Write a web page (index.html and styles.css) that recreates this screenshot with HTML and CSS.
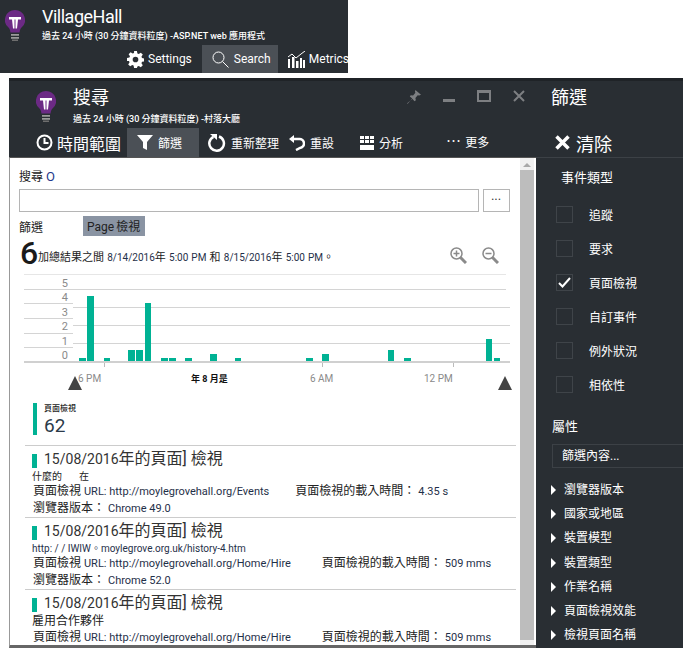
FILE: index.html
```html
<!DOCTYPE html>
<html lang="zh-Hant">
<head>
  <meta charset="UTF-8" />
  <title>搜尋</title>
  <link rel="stylesheet" href="styles.css">
</head>
<body>
  <svg class="defs" width="0" height="0">
    <symbol id="bulb" viewBox="0 0 20 31">
      <path fill="#6c2a85" d="M10 0a10 10 0 0 0-6.500 17.600c1.200 1.200 1.800 3 1.900 4.900h9.200c.1-1.900.7-3.700 1.900-4.900A10 10 0 0 0 10 0z"/>
      <path fill="#fff" d="M4 7h12v2.500h-3l-1 9h-1.500v-9h-1v9H8l-1-9H4z"/>
      <path fill="#9a9a9a" d="M6 24h8v1.800H6zM6 27h8v1.800H6z"/>
      <path fill="#6e6e6e" d="M7 29.500h6V31H7z"/>
    </symbol>
  </svg>

  <header class="app-bar">
    <div class="app-head">
      <svg class="bulb"><use href="#bulb"/></svg>
      <div>
        <h1 class="app-title">VillageHall</h1>
        <p class="sub">過去 24 小時 (30 分鐘資料粒度) -ASP.NET web 應用程式</p>
      </div>
    </div>
    <nav class="app-tabs">
      <a class="app-tab">
        <svg width="17" height="17" viewBox="0 0 24 24"><path fill="#fff" fill-rule="evenodd" d="M10 0h4l.7 3.400 1.900.8 2.900-1.900 2.800 2.800-1.900 2.900.8 1.900 3.400.7v4l-3.400.7-.8 1.900 1.900 2.900-2.800 2.800-2.900-1.900-1.900.8L14 24h-4l-.7-3.400-1.900-.8-2.900 1.900-2.800-2.800 1.900-2.900-.8-1.900L0 14v-4l3.400-.7.800-1.900-1.900-2.900 2.800-2.800 2.900 1.900 1.900-.8zM12 8a4 4 0 1 0 0 8 4 4 0 0 0 0-8z"/></svg>
        Settings
      </a>
      <a class="app-tab app-tab-on">
        <svg width="17" height="17" viewBox="0 0 17 17" fill="none" stroke="#fff"><circle cx="6.500" cy="6.500" r="5.500"/><path d="M10.500 10.500l6 6"/></svg>
        Search
      </a>
      <a class="app-tab">
        <svg width="17" height="17" viewBox="0 0 17 17"><path fill="#fff" d="M0 8h2v9H0zM4 6h2.500v11H4zM8 10h2.500v7H8zM12 7h2v10h-2zM15 9h2v8h-2z"/><path fill="none" stroke="#fff" d="M0 6l4-3 4 4 5-4 4-3"/></svg>
        Metrics
      </a>
    </nav>
  </header>

  <div class="blade">
    <main class="main">
      <div class="blade-head">
        <svg class="bulb"><use href="#bulb"/></svg>
        <div class="blade-names">
          <h2 class="blade-title">搜尋</h2>
          <p class="sub">過去 24 小時 (30 分鐘資料粒度) -村落大廳</p>
        </div>
        <div class="win-btns">
          <svg width="14" height="14" viewBox="0 0 15 15"><path fill="#7d7f82" d="M9 0l6 5-2 1-1.500-.500L9 8.500 9.500 11l-1.500 1-2.500-3L1 14.500 0 15l.5-1L6 9.500 3 7l1-1.500 2.500.500 2.500-3L8.500 2z"/></svg>
          <svg width="12" height="13" viewBox="0 0 12 13"><path fill="#7d7f82" d="M0 9h12v3H0z"/></svg>
          <svg width="14" height="12" viewBox="0 0 14 12"><path fill="#7d7f82" d="M0 0h14v12H0zM2 3v7h10V3z"/></svg>
          <svg width="12" height="12" viewBox="0 0 12 12" fill="none" stroke="#7d7f82" stroke-width="2"><path d="M1 1l10 10M11 1L1 11"/></svg>
        </div>
      </div>
      <div class="cmd-bar">
        <a class="cmd cmd-time">
          <svg width="17" height="17" viewBox="0 0 17 17" fill="none" stroke="#fff" stroke-width="2"><circle cx="8.500" cy="8.500" r="7"/><path d="M8.500 4v5h4"/></svg>
          時間範圍
        </a>
        <a class="cmd cmd-on">
          <svg width="16" height="15" viewBox="0 0 16 15"><path fill="#fff" d="M0 0h16l-6 7v8l-4-2V7z"/></svg>
          篩選
        </a>
        <a class="cmd cmd-refresh">
          <svg width="18" height="19" viewBox="0 0 18 19" fill="none" stroke="#fff" stroke-width="2.500"><path d="M11 3.500a7.300 7.300 0 1 1-5.500.3"/><path fill="#fff" stroke="none" d="M2 1h7v6z"/></svg>
          重新整理
        </a>
        <a class="cmd cmd-reset">
          <svg width="16" height="16" viewBox="0 0 16 16" fill="none" stroke="#fff" stroke-width="2.500"><path d="M3 4h7a4.500 4.500 0 0 1 1 9l-4 2"/><path fill="#fff" stroke="none" d="M5 0v8L0 4z"/></svg>
          重設
        </a>
        <a class="cmd cmd-chart">
          <svg width="14" height="14" viewBox="0 0 14 14"><path fill="#fff" d="M0 0h4v3H0zM5 0h4v3H5zM10 0h4v3h-4zM0 4h4v3H0zM5 4h4v3H5zM10 4h4v3h-4zM0 9h14v5H0z"/></svg>
          分析
        </a>
        <a class="cmd cmd-more"><span class="dots">•••</span> 更多</a>
      </div>
      <div class="pane">
        <div class="pane-body">
          <label class="field-label">搜尋 <span class="blue">O</span></label>
          <div class="search-row">
            <div class="search-box"></div>
            <div class="search-more">•••</div>
          </div>
          <div class="filter-row">
            <span>篩選</span>
            <span class="chip">Page 檢視</span>
          </div>
          <div class="total-row">
            <b class="total">6</b>
            <span class="total-text">加總結果之間 <em>8/14/2016</em>年 <em>5:00 PM</em> 和 <em>8/15/2016</em>年 <em>5:00 PM</em>。</span>
            <span class="zooms">
              <svg width="17" height="17" viewBox="0 0 17 17" fill="none" stroke="#8a8a8a" stroke-width="1.500"><circle cx="6.500" cy="6.500" r="5.500"/><path stroke-width="3" d="M10.500 10.500l5.500 5.500"/><path d="M3.500 6.500h6M6.500 3.500v6"/></svg>
              <svg width="17" height="17" viewBox="0 0 17 17" fill="none" stroke="#8a8a8a" stroke-width="1.500"><circle cx="6.500" cy="6.500" r="5.500"/><path stroke-width="3" d="M10.500 10.500l5.500 5.500"/><path d="M3.500 6.500h6"/></svg>
            </span>
          </div>

          <svg class="chart" width="496" height="120" viewBox="0 0 496 120">
            <g stroke="#d4d4d4">
              <path stroke="#e6e6e6" d="M5 .5h482"/>
              <path d="M5 15.500h482M5 29.500h49M5 44.500h49M5 59.500h49M5 73.500h49M54 33.500h437M54 51.500h437M54 69.500h437"/>
            </g>
            <g class="chart-nums" text-anchor="end">
              <text x="49" y="13">5</text><text x="49" y="27">4</text><text x="49" y="42">3</text>
              <text x="49" y="56">2</text><text x="49" y="71">1</text><text x="49" y="85">0</text>
            </g>
            <g fill="#00b294">
              <rect x="60" y="84" width="7" height="4"/><rect x="68" y="22" width="7" height="66"/>
              <rect x="85" y="84" width="6" height="4"/><rect x="109" y="76" width="7" height="12"/>
              <rect x="117" y="76" width="7" height="12"/><rect x="126" y="29" width="6" height="59"/>
              <rect x="142" y="84" width="7" height="4"/><rect x="150" y="84" width="7" height="4"/>
              <rect x="166" y="84" width="7" height="4"/><rect x="191" y="80" width="7" height="8"/>
              <rect x="216" y="84" width="6" height="4"/><rect x="287" y="84" width="7" height="4"/>
              <rect x="303" y="80" width="7" height="8"/><rect x="369" y="76" width="6" height="12"/>
              <rect x="385" y="84" width="7" height="4"/><rect x="467" y="65" width="6" height="23"/>
              <rect x="475" y="84" width="6" height="4"/>
            </g>
            <path stroke="#d0d0d0" stroke-width="2" d="M5 88h486"/>
            <path stroke="#bbb" d="M85.500 89v4M303.500 89v4M434.500 89v4"/>
            <g class="chart-axis">
              <text x="59" y="108">6 PM</text>
              <text x="172" y="108" class="chart-axis-bold">年 8 月是</text>
              <text x="291" y="108">6 AM</text>
              <text x="405" y="108">12 PM</text>
            </g>
            <path fill="#444" d="M49 116l7-14 7 14zM479 116l7-14 7 14z"/>
          </svg>

          <div class="summary">
            <small>頁面檢視</small>
            <strong>62</strong>
          </div>

          <article class="row">
            <h3 class="row-title"><em>15/08/2016</em>年的頁面] 檢視</h3>
            <p class="row-what">什麼的<span class="gap"></span>在</p>
            <p class="row-line"><span class="col-url">頁面檢視 <em>URL: http://moylegrovehall.org/Events</em></span><span>頁面檢視的載入時間： <em>4.35 s</em></span></p>
            <p class="row-line"><span>瀏覽器版本： <em>Chrome 49.0</em></span></p>
          </article>
          <article class="row">
            <h3 class="row-title"><em>15/08/2016</em>年的頁面] 檢視</h3>
            <p class="row-what row-link">http: / / IWIW。moylegrove.org.uk/history-4.htm</p>
            <p class="row-line row-wide"><span class="col-url">頁面檢視 <em>URL: http://moylegrovehall.org/Home/Hire</em></span><span>頁面檢視的載入時間： <em>509 mms</em></span></p>
            <p class="row-line"><span>瀏覽器版本： <em>Chrome 52.0</em></span></p>
          </article>
          <article class="row row-last">
            <h3 class="row-title"><em>15/08/2016</em>年的頁面] 檢視</h3>
            <p class="row-line">雇用合作夥伴</p>
            <p class="row-line row-wide"><span class="col-url">頁面檢視 <em>URL: http://moylegrovehall.org/Home/Hire</em></span><span>頁面檢視的載入時間： <em>509 mms</em></span></p>
          </article>
        </div>
        <div class="scroll">
          <i class="scroll-up"></i>
          <div class="scroll-thumb"></div>
        </div>
      </div>
    </main>

    <aside class="side">
      <h2 class="side-title">篩選</h2>
      <a class="clear">
        <svg width="15" height="15" viewBox="0 0 15 15" fill="none" stroke="#fff" stroke-width="3.500"><path d="M1.500 1.500l12 12M13.500 1.500l-12 12"/></svg>
        清除
      </a>
      <h3 class="side-sub">事件類型</h3>
      <ul class="checks">
        <li><i class="box"></i>追蹤</li>
        <li><i class="box"></i>要求</li>
        <li><i class="box"><svg width="13" height="11" viewBox="0 0 13 11" fill="none" stroke="#fff" stroke-width="2"><path d="M1 6l3.500 3.500L12 1"/></svg></i>頁面檢視</li>
        <li><i class="box"></i>自訂事件</li>
        <li><i class="box"></i>例外狀況</li>
        <li><i class="box"></i>相依性</li>
      </ul>
      <h3 class="side-prop">屬性</h3>
      <div class="prop-filter">篩選內容...</div>
      <ul class="tree">
        <li>瀏覽器版本</li>
        <li>國家或地區</li>
        <li>裝置模型</li>
        <li>裝置類型</li>
        <li>作業名稱</li>
        <li>頁面檢視效能</li>
        <li>檢視頁面名稱</li>
      </ul>
    </aside>
  </div>
</body>
</html>
```

FILE: styles.css
```css
html, body { margin: 0; padding: 0; height: 648px; overflow: hidden; background: #fff; }
body { font-family: Roboto, "Noto Sans CJK TC", sans-serif; font-size: 12px; color: #222; }
h1, h2, h3, p, ul { margin: 0; padding: 0; font-weight: normal; }
ul { list-style: none; }
em { font-style: normal; color: #1f3049; font-size: 11px; }
.defs { position: absolute; }
.bulb { width: 20px; height: 31px; flex: none; }
.sub { color: #fff; font-size: 9px; line-height: 12px; font-weight: 500; white-space: nowrap; }

.app-bar { width: 348px; height: 73px; background: #292e33; color: #fff; display: flex; flex-direction: column; overflow: hidden; }
.app-head { display: flex; gap: 17px; padding: 10px 0 0 5px; height: 35px; }
.app-title { font-size: 18px; letter-spacing: -.5px; line-height: 22px; margin-top: -4px; }
.app-head .sub { margin-top: 2px; }
.app-tabs { display: flex; height: 28px; padding-left: 127px; }
.app-tab { display: flex; align-items: center; gap: 4px; font-size: 12px; white-space: nowrap; }
.app-tab-on { background: #4b5056; margin: 0 10px; width: 76px; padding-left: 10px; box-sizing: border-box; gap: 5px; flex: none; }

.blade { margin: 5px 0 0 9px; height: 570px; display: flex; background: #292e33; border-top: 3px solid #1f2327; box-sizing: border-box; }
.main { width: 527px; display: flex; flex-direction: column; flex: none; }
.blade-head { display: flex; height: 47px; padding: 10px 0 0 27px; box-sizing: border-box; gap: 17px; }
.blade-names { flex: 1; }
.blade-title { color: #fff; font-size: 18px; line-height: 24px; margin-top: -5px; }
.blade-names .sub { margin-top: 3px; }
.win-btns { display: flex; align-items: flex-start; gap: 22px; padding-right: 11px; margin-top: -1px; }
.cmd-bar { display: flex; height: 29px; align-items: stretch; color: #fff; font-size: 12px; padding-left: 27px; }
.cmd { display: flex; align-items: center; gap: 5px; white-space: nowrap; }
.cmd-time { font-size: 16px; width: 91px; gap: 4px; }
.cmd-on { background: #4b5056; width: 72px; padding-left: 10px; box-sizing: border-box; margin-right: 9px; }
.cmd-refresh { width: 81px; }
.cmd-reset { width: 71px; }
.cmd-chart { width: 87px; }
.dots { font-size: 9px; letter-spacing: 2px; }
.cmd-more { padding-bottom: 3px; gap: 3px; }

.pane { flex: 1; min-height: 0; display: flex; background: #fff; border-left: 1px solid #999; border-top: 1px solid #555; border-bottom: 3px solid #666; }
.pane-body { flex: 1; min-width: 0; padding: 11px 0 0 9px; overflow: hidden; }
.scroll { width: 14px; margin: 0 2px 0 0; background: #f0f0f0; flex: none; }
.scroll-up { display: block; width: 0; margin: 5px auto 3px; border: 4px solid transparent; border-top: 0; border-bottom: 4px solid #a8a8a8; }
.scroll-thumb { background: #bdbdbd; height: 470px; }

.field-label { display: block; line-height: 16px; }
.blue { color: #1f3a8c; font-size: 13px; }
.search-row { display: flex; gap: 4px; margin-top: 4px; }
.search-box { width: 458px; height: 21px; border: 1px solid #b5b5b5; }
.search-more { width: 25px; height: 21px; border: 1px solid #b5b5b5; font-size: 7px; letter-spacing: 1px; line-height: 21px; text-align: center; color: #333; }
.filter-row { display: flex; align-items: center; gap: 40px; height: 20px; margin-top: 4px; }
.chip { background: #8a94a3; width: 62px; height: 20px; line-height: 23px; padding-left: 4px; box-sizing: border-box; white-space: nowrap; word-spacing: -1px; }
.total-row { display: flex; align-items: center; height: 34px; width: 487px; }
.total { font-size: 32px; font-weight: 500; margin-left: 1px; width: 18px; line-height: 34px; color: #1a1a1a; }
.total-text { font-size: 11px; white-space: nowrap; flex: 1; padding-top: 6px; word-spacing: .5px; }
.total-text em { font-size: 10px; }
.zooms { display: flex; gap: 15px; padding: 4px 7px 0 0; }

.chart { display: block; margin: 4px 0 0 0; }
.chart-nums { font-size: 11px; fill: #8a8a8a; }
.chart-axis { font-size: 10px; fill: #8a8a8a; }
.chart-axis-bold { fill: #111; font-weight: 700; font-size: 9px; }

.summary { margin: 9px 0 0 14px; padding-left: 7px; border-left: 4px solid #00b294; height: 32px; }
.summary small { display: block; font-size: 8px; line-height: 12px; font-weight: 500; }
.summary strong { display: block; font-size: 19px; line-height: 22px; font-weight: 400; color: #2b3a4a; }

.row { width: 491px; margin: 0 0 0 6px; padding: 0 0 1px 0; border-top: 1px solid #ccc; height: 70px; }
.summary + .row { margin-top: 10px; }
.row-title { font-size: 16px; line-height: 20px; padding: 3px 0 0 19px; position: relative; color: #333; white-space: nowrap; }
.row-title em { font-size: 14px; color: inherit; }
.row-title::before { content: ""; position: absolute; left: 7px; top: 8px; width: 5px; height: 14px; background: #00b294; }
.row-what { font-size: 10px; line-height: 13px; margin: 1px 0 0 7px; white-space: nowrap; }
.gap { display: inline-block; width: 17px; }
.row-link { color: #1f3049; }
.row-line { line-height: 16px; padding-left: 8px; white-space: nowrap; display: flex; align-items: baseline; }
.row-line > .col-url { margin-right: 26px; }
.row-wide > .col-url { margin-right: 31px; }
.row-last .row-line:first-of-type { margin-left: -1px; }

.side { flex: 1; min-width: 0; color: #fff; font-size: 12px; }
.side-title { font-size: 18px; line-height: 24px; padding: 5px 0 0 15px; }
.clear { display: flex; align-items: center; gap: 6px; font-size: 18px; height: 29px; padding: 18px 0 0 19px; border-bottom: 1px solid #3c4146; }
.side-sub { font-size: 13px; line-height: 18px; margin: 11px 0 0 25px; }
.checks { margin: 19px 0 0 20px; }
.checks li { display: flex; align-items: center; gap: 16px; height: 17px; margin-bottom: 17px; }
.box { width: 15px; height: 15px; border: 1px solid #3f4449; display: flex; align-items: center; justify-content: center; flex: none; }
.side-prop { font-size: 13px; line-height: 18px; margin: 25px 0 0 16px; }
.prop-filter { margin: 8px 0 0 16px; height: 22px; line-height: 22px; border: 1px solid #3c4146; border-right: 0; padding-left: 9px; }
.tree { margin: 10px 0 0 15px; }
.tree li { position: relative; line-height: 24.2px; padding-left: 13px; white-space: nowrap; }
.tree li::before { content: ""; position: absolute; left: 0; top: 7px; border: 5px solid transparent; border-left: 5px solid #fff; border-right: 0; }
```
